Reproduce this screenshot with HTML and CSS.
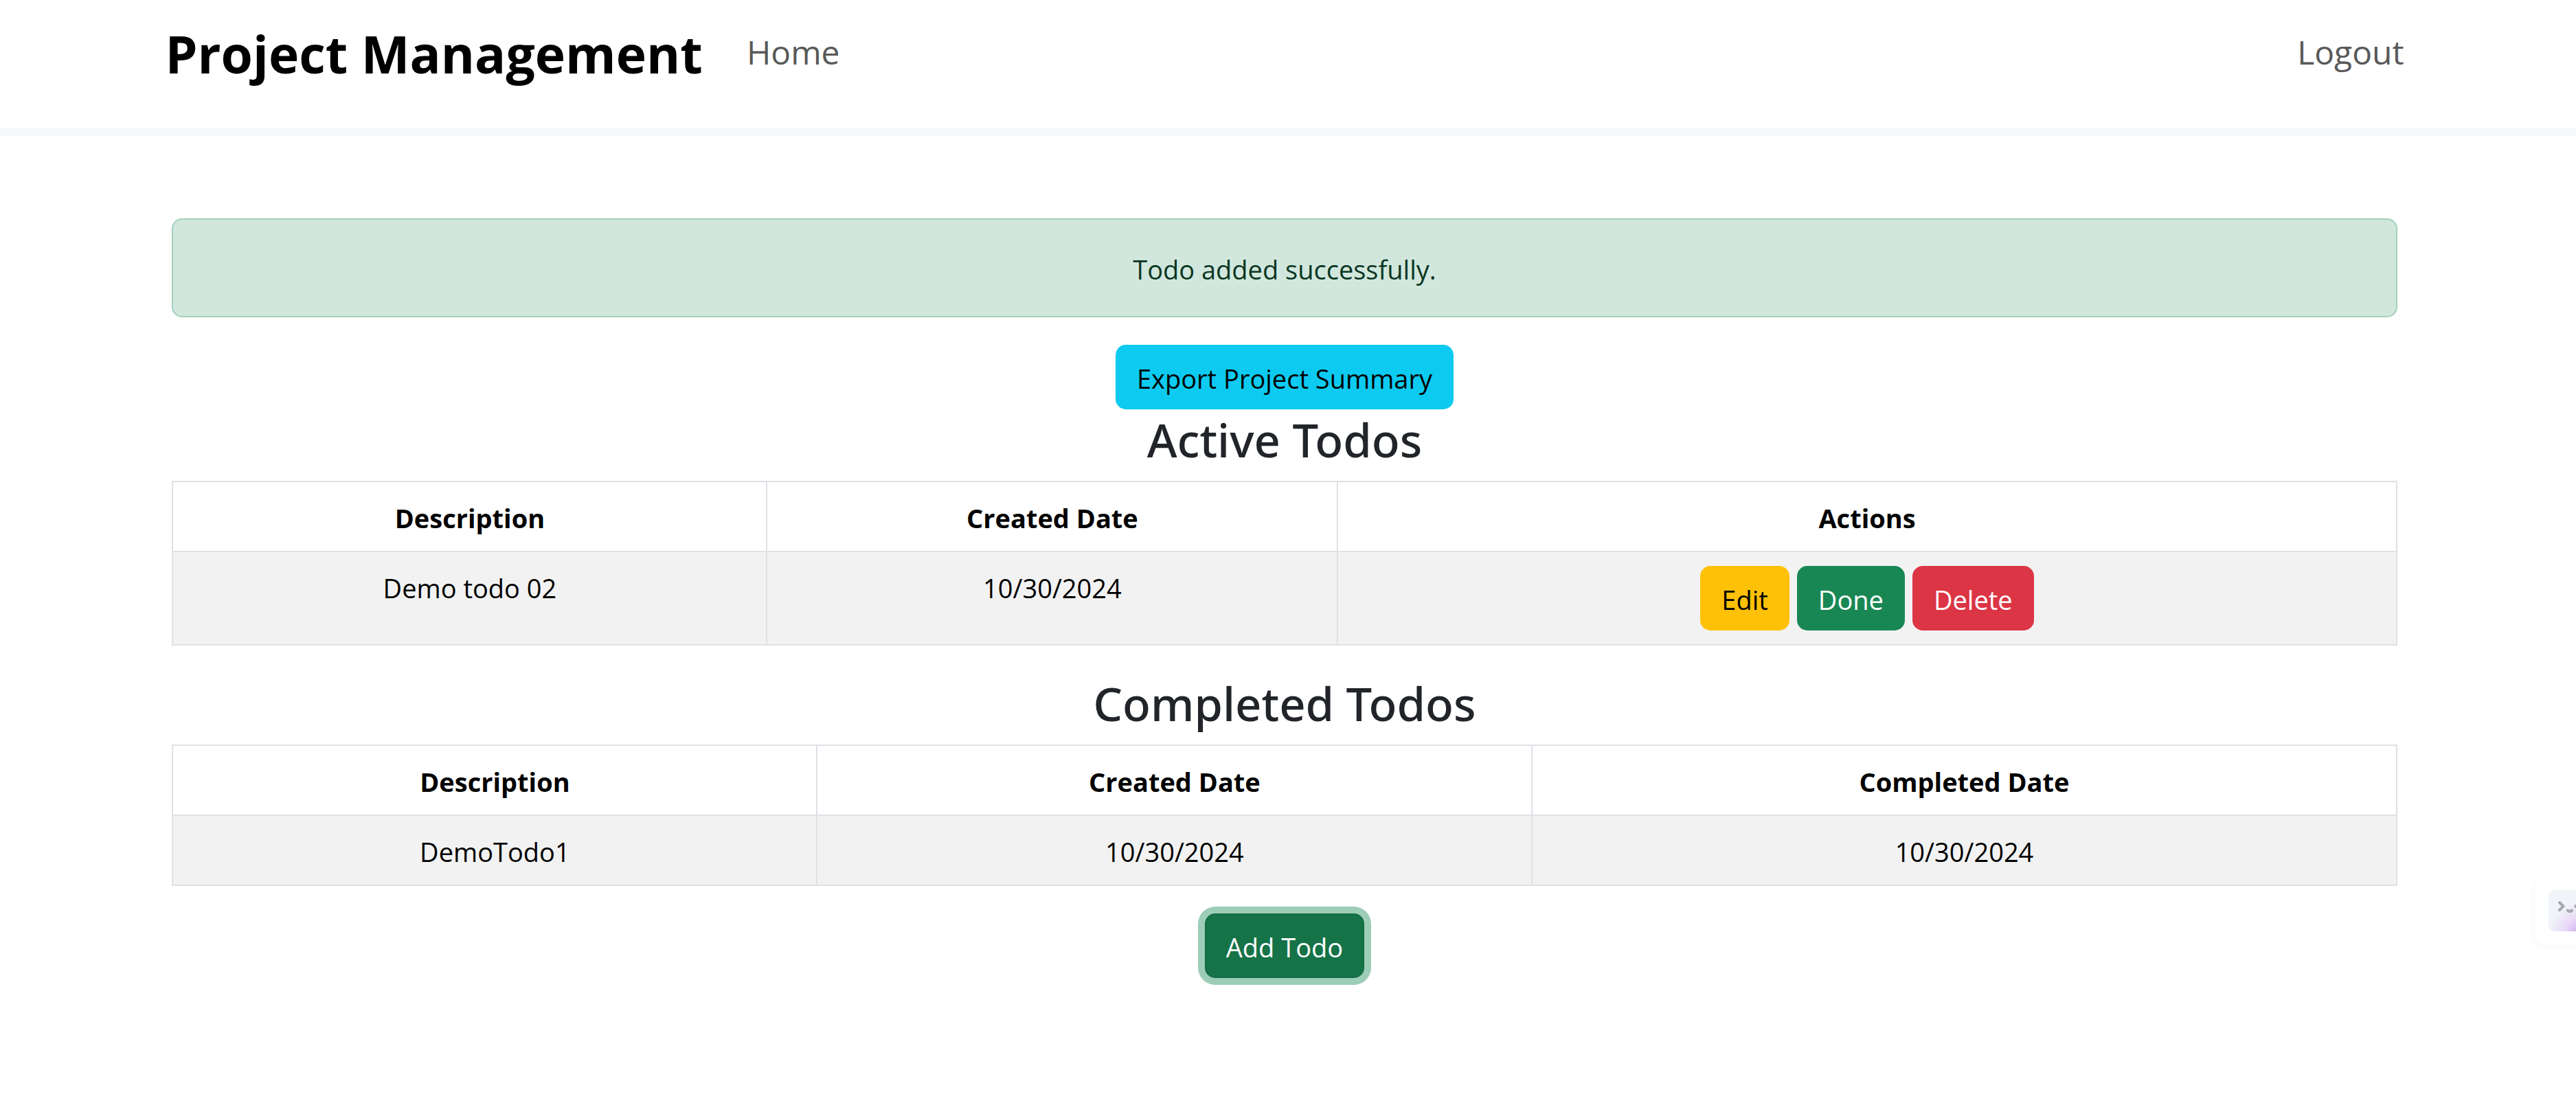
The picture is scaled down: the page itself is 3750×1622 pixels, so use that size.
FILE: index.html
```html
<!DOCTYPE html>
<html lang="en">
<head>
<meta charset="utf-8">
<title>Project Management</title>
<link rel="stylesheet" href="styles.css">
</head>
<body>
<header class="site-header">
  <nav class="container navbar">
    <a class="brand" href="#">Project Management</a>
    <a class="nav-link" href="#">Home</a>
    <a class="nav-link nav-end" href="#">Logout</a>
  </nav>
</header>
<main class="container content">
  <div class="alert" role="alert">Todo added successfully.</div>
  <button class="btn btn-info" type="button">Export Project Summary</button>
  <h1 class="heading">Active Todos</h1>
  <table class="table">
    <colgroup><col class="col-active-description"><col class="col-active-created"><col></colgroup>
    <thead>
      <tr><th scope="col">Description</th><th scope="col">Created Date</th><th scope="col">Actions</th></tr>
    </thead>
    <tbody>
      <tr>
        <td>Demo todo 02</td>
        <td>10/30/2024</td>
        <td class="cell-actions">
          <div class="actions">
            <button class="btn btn-warning" type="button">Edit</button>
            <button class="btn btn-success" type="button">Done</button>
            <button class="btn btn-danger" type="button">Delete</button>
          </div>
        </td>
      </tr>
    </tbody>
  </table>
  <h1 class="heading">Completed Todos</h1>
  <table class="table">
    <colgroup><col class="col-done-description"><col class="col-done-created"><col></colgroup>
    <thead>
      <tr><th scope="col">Description</th><th scope="col">Created Date</th><th scope="col">Completed Date</th></tr>
    </thead>
    <tbody>
      <tr><td>DemoTodo1</td><td>10/30/2024</td><td>10/30/2024</td></tr>
    </tbody>
  </table>
  <button class="btn btn-add" type="button">Add Todo</button>
</main>
<aside class="widget">
  <div class="widget-face">
    <svg width="60" height="60" viewBox="0 0 60 60" fill="none" stroke="#a5a8b0" stroke-width="4" stroke-linecap="round" stroke-linejoin="round" aria-hidden="true">
      <path d="M16 18l5.500 5.500-5.500 5.500M28 29.500q3 3 6 0M45 18l-5.500 5.500 5.500 5.500"/>
    </svg>
  </div>
</aside>
</body>
</html>
```

FILE: styles.css
```css
*, *::before, *::after { box-sizing: border-box; }

body {
  margin: 0;
  padding-right: 10px;
  background: #fff;
  color: #212529;
  font: 400 38px/60px "Open Sans", "Noto Sans", sans-serif;
}

.container {
  width: 88%;
  margin: 0 auto;
}

.site-header {
  margin-right: -10px;
  padding: 16px 10px 50px 0;
  border-bottom: 12px solid #f8f9fc;
}

.navbar {
  display: flex;
  align-items: center;
  padding: 0 16px;
}

.brand {
  margin-right: 64px;
  padding-top: 4px;
  color: #000;
  font-size: 75px;
  font-weight: 700;
  line-height: 116px;
  text-decoration: none;
}

.nav-link {
  color: #595959;
  font-size: 48px;
  text-decoration: none;
}

.nav-end { margin-left: auto; }

.content {
  display: flex;
  flex-direction: column;
  align-items: center;
  padding: 120px 26px 60px;
}

.alert {
  width: 100%;
  margin-bottom: 40px;
  padding: 42px 40px 38px;
  border: 2px solid #a3cfbb;
  border-radius: 15px;
  background: #d1e7dd;
  color: #0a3622;
  text-align: center;
}

.btn {
  padding: 17px 29px 13px;
  border: 2px solid transparent;
  border-radius: 15px;
  color: #fff;
  font: inherit;
}

.btn-info { border-color: #0dcaf0; background: #0dcaf0; color: #000; }
.btn-warning { border-color: #ffc107; background: #ffc107; color: #000; }
.btn-success { border-color: #198754; background: #198754; }
.btn-danger { border-color: #dc3545; background: #dc3545; }

.btn-add {
  border-color: #146c43;
  background: #157347;
  box-shadow: 0 0 0 10px #9dcdb7;
}

.heading {
  margin: 0 0 18px;
  padding-top: 2px;
  font-family: "Noto Sans", "Open Sans", sans-serif;
  font-size: 67px;
  font-weight: 500;
  line-height: 84px;
}

.table {
  width: 100%;
  margin-bottom: 40px;
  border-collapse: collapse;
  table-layout: fixed;
  color: #000;
  text-align: center;
}

.table th,
.table td {
  padding: 22px 20px 18px;
  border: 2px solid #dee2e6;
  vertical-align: top;
}

.table th { font-weight: 700; }
.table td { background: #f2f2f2; }
.table .cell-actions { padding: 20px; }

.col-active-description { width: 865px; }
.col-active-created { width: 831px; }
.col-done-description { width: 938px; }
.col-done-created { width: 1041px; }

.actions {
  display: flex;
  justify-content: center;
  gap: 11px;
}

/* Assistant launcher that peeks in from the window's right edge */
.widget {
  position: fixed;
  top: 1275px;
  right: 0;
  width: 60px;
  padding: 21px 0 20px 20px;
  overflow: hidden;
  border-radius: 16px 0 0 16px;
  background: #fff;
  box-shadow: 0 2px 12px rgba(0, 0, 0, 0.04);
}

.widget-face {
  width: 60px;
  height: 60px;
  border-radius: 8px;
  background: radial-gradient(circle at 80% 110%, #c9a0ee 0, #ead9f7 26px, #f1f4f9 48px);
}

.widget-face svg { display: block; }
```
